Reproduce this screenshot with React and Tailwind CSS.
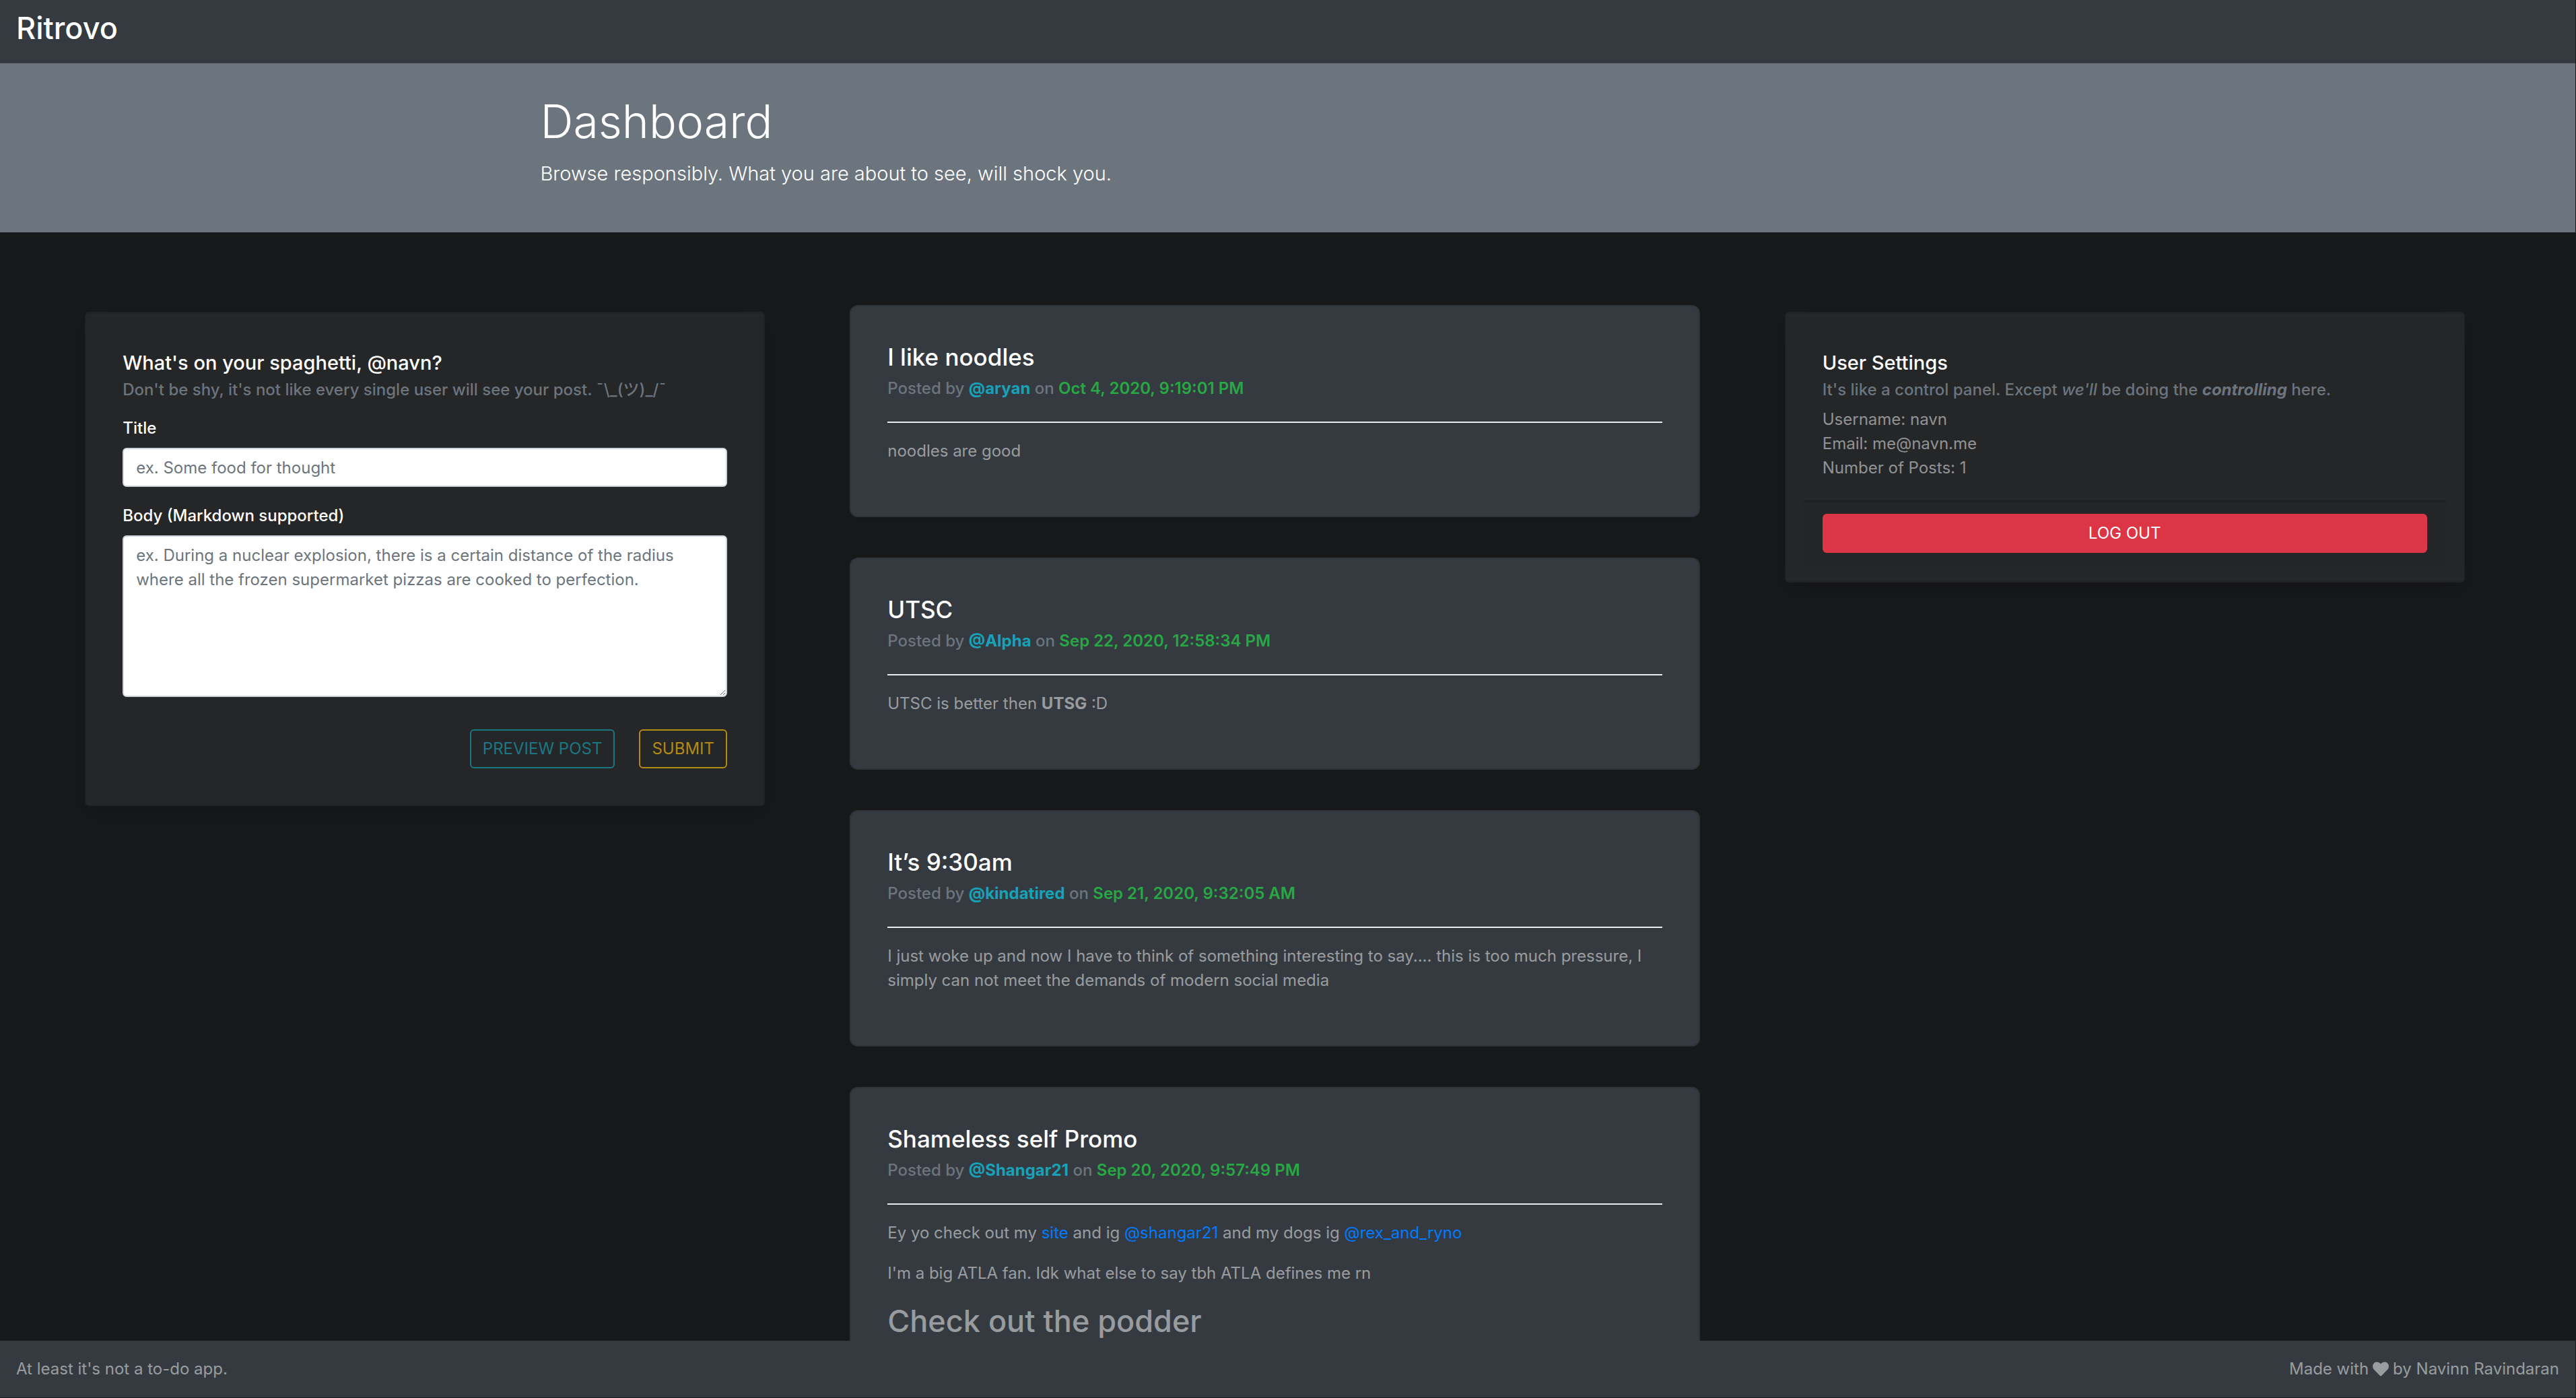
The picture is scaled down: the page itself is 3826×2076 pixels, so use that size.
const posts = [
  {
    title: "I like noodles",
    author: "@aryan",
    date: "Oct 4, 2020, 9:19:01 PM",
    body: <p className="mb-6">noodles are good</p>,
  },
  {
    title: "UTSC",
    author: "@Alpha",
    date: "Sep 22, 2020, 12:58:34 PM",
    body: (
      <p className="mb-6">
        UTSC is better then <strong className="font-bold">UTSG</strong> :D
      </p>
    ),
  },
  {
    title: "It’s 9:30am",
    author: "@kindatired",
    date: "Sep 21, 2020, 9:32:05 AM",
    body: (
      <p className="mb-6">
        I just woke up and now I have to think of something interesting to say.... this is too much
        pressure, I simply can not meet the demands of modern social media
      </p>
    ),
  },
  {
    title: "Shameless self Promo",
    author: "@Shangar21",
    date: "Sep 20, 2020, 9:57:49 PM",
    body: (
      <>
        <p className="mb-6">
          Ey yo check out my <BodyLink>site</BodyLink> and ig <BodyLink>@shangar21</BodyLink> and my
          dogs ig <BodyLink>@rex_and_ryno</BodyLink>
        </p>
        <p className="mb-6">I'm a big ATLA fan. Idk what else to say tbh ATLA defines me rn</p>
        <h1 className="mb-3 text-[45px] leading-[58px] font-medium">Check out the podder</h1>
      </>
    ),
  },
];

function BodyLink({ children }) {
  return (
    <a href="#" className="text-[#007bff]">
      {children}
    </a>
  );
}

function Panel({ title, subtitle, children }) {
  return (
    <section className="mx-auto mt-[118px] w-4/5 rounded-md border-2 border-[#202224] bg-[#242628] p-6 shadow-[0_12px_36px_rgba(0,0,0,0.18)]">
      <div className="px-[30px] pt-8">
        <h2 className="text-[29px] leading-9 font-medium text-white">{title}</h2>
        <p className="mt-1 font-medium text-[#6c757d]">{subtitle}</p>
      </div>
      {children}
    </section>
  );
}

function Post({ title, author, date, body }) {
  return (
    <article className="mb-[60px] rounded-xl border-2 border-[#2f3439] bg-[#343a40] p-[54px] shadow-[0_4px_12px_rgba(0,0,0,0.08)]">
      <h2 className="text-[35px] leading-[43px] font-medium text-white">{title}</h2>
      <p className="mt-[7px] font-medium text-[#6c757d]">
        Posted by{" "}
        <a href="#" className="font-bold text-[#17a2b8]">
          {author}
        </a>{" "}
        on <span className="font-semibold text-[#28a745]">{date}</span>
      </p>
      <hr className="mt-[31px] mb-6 border-t-2 border-[#e9ecef]" />
      <div className="text-white/50">{body}</div>
    </article>
  );
}

export default function App() {
  return (
    <div className="h-screen overflow-hidden bg-[#18191b] pr-px font-['Inter','Noto_Sans_CJK_JP',sans-serif] text-[24px] leading-9">
      <nav className="bg-[#343a40] px-6 pt-3 pb-[22px]">
        <a href="#" className="block text-[45px] leading-[60px] font-medium text-white">
          Ritrovo
        </a>
      </nav>

      <header className="bg-[#6c757d] pt-[43px] pb-[65px] text-white">
        <div className="mx-auto max-w-[2280px] px-[30px]">
          <h1 className="text-[68px] leading-[86px] font-light">Dashboard</h1>
          <p className="mt-3 text-[29px] leading-[45px] font-light">
            Browse responsibly. What you are about to see, will shock you.
          </p>
        </div>
      </header>

      <main className="grid grid-cols-[33%_33%_33%] items-start">
        <Panel
          title="What's on your spaghetti, @navn?"
          subtitle="Don't be shy, it's not like every single user will see your post. ¯\_(ツ)_/¯"
        >
          <form className="px-[30px] pb-[30px] text-white">
            <label htmlFor="title" className="mt-[21px] block font-medium">
              Title
            </label>
            <input
              id="title"
              type="text"
              placeholder="ex. Some food for thought"
              className="mt-[11px] block h-[58px] w-full rounded-md border-2 border-[#ced4da] bg-white px-[18px] text-[#495057] placeholder:text-[#6c757d]"
            />
            <label htmlFor="body" className="mt-[25px] block font-medium">
              Body (Markdown supported)
            </label>
            <textarea
              id="body"
              rows={6}
              placeholder="ex. During a nuclear explosion, there is a certain distance of the radius where all the frozen supermarket pizzas are cooked to perfection."
              className="mt-[11px] block w-full resize-y rounded-md border-2 border-[#ced4da] bg-white px-[18px] py-[10px] text-[#495057] placeholder:text-[#6c757d]"
            />
            <div className="mt-12 flex justify-end gap-9">
              <button
                type="button"
                className="rounded-md border-2 border-[#1c7785] px-[17px] py-[9px] text-[#1c7785]"
              >
                PREVIEW POST
              </button>
              <button
                type="submit"
                className="rounded-md border-2 border-[#b28b13] px-[17px] py-[9px] text-[#b28b13]"
              >
                SUBMIT
              </button>
            </div>
          </form>
        </Panel>

        <div className="mt-[108px]">
          {posts.map((post) => (
            <Post key={post.title} {...post} />
          ))}
        </div>

        <Panel
          title="User Settings"
          subtitle={
            <>
              It's like a control panel. Except <i>we'll</i> be doing the{" "}
              <b className="font-bold italic">controlling</b> here.
            </>
          }
        >
          <div className="px-[30px] pt-2 pb-[30px] text-white/50">
            <p>Username: navn</p>
            <p>Email: me@navn.me</p>
            <p>Number of Posts: 1</p>
          </div>
          <div className="border-t-2 border-[#1f2123] bg-[#232527] px-[30px] py-[18px]">
            <button
              type="button"
              className="block h-[58px] w-full rounded-md bg-[#dc3545] text-white"
            >
              LOG OUT
            </button>
          </div>
        </Panel>
      </main>

      <footer className="fixed right-px bottom-px left-0 flex items-center justify-between bg-[#343a40] px-6 py-6 text-white/50">
        <span>At least it's not a to-do app.</span>
        <span className="flex items-center gap-[6px]">
          Made with
          <svg viewBox="0 0 512 512" className="size-6 fill-current" aria-label="love">
            <path d="M462.3 62.6C407.5 15.9 326 24.3 275.7 76.2L256 96.5l-19.7-20.3C186.1 24.3 104.5 15.9 49.7 62.6c-62.8 53.6-66.1 149.8-9.9 207.9l193.5 199.8c12.5 12.9 32.8 12.9 45.3 0l193.5-199.8c56.3-58.1 53-154.3-9.8-207.9z" />
          </svg>
          by Navinn Ravindaran
        </span>
      </footer>
    </div>
  );
}
